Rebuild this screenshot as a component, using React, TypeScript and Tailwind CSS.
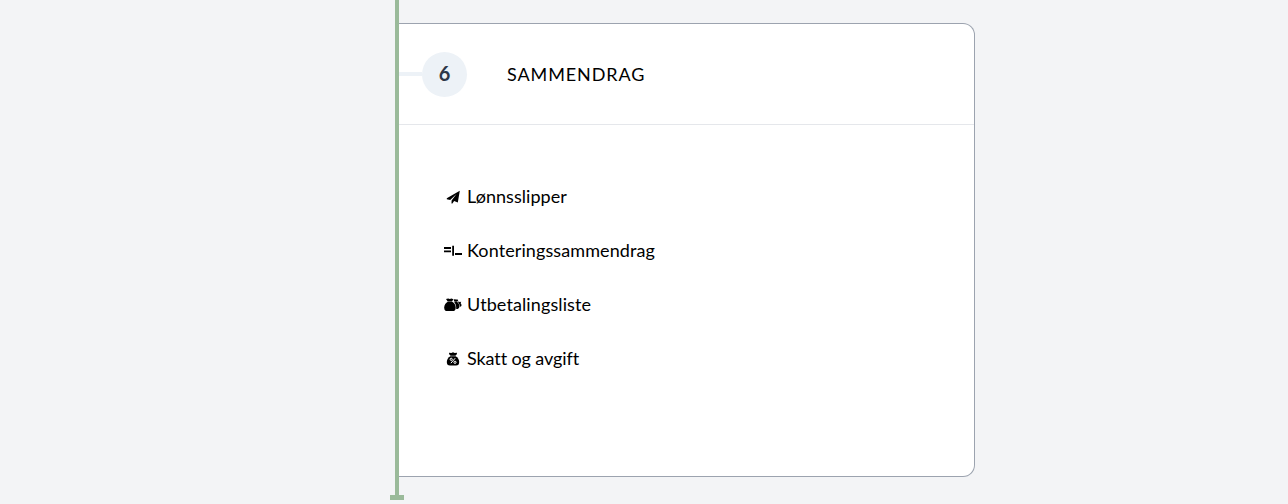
import type { ReactNode } from 'react';
import clsx from 'clsx';

type SummaryLinkProps = {
    icon: ReactNode
    children: string
    className?: string
}

const PlaneIcon = () => (
    <svg width="18" height="16" viewBox="0 0 18 16" fill="currentColor">
        <path d="M15.8 1.8 2.8 9.2v1l3.4.8 6.3-6.1-4.9 6.5-.1 3.2h.9l1.7-2.5 3.7 1.3z" />
    </svg>
)

const PostingIcon = () => (
    <svg width="18" height="16" viewBox="0 0 18 16" fill="currentColor">
        <path d="M0 4h7v2H0zM0 7.5h7v1.7H0zM8.2 2.8H10v10H8.2zM11 10h7v2h-7z" />
    </svg>
)

const BagsIcon = () => (
    <svg width="18" height="16" viewBox="0 0 18 16" fill="currentColor">
        <path d="M2 2.1 4.2 1.5l1.6.6 1.7-.6 1.9.7-1.4 2.2H3.7z" />
        <path d="M3.8 4.7h4.4c2 1.2 3.5 3.2 3.5 5.7 0 2.6-1 3.6-3 3.6H3.2c-2 0-3-1-3-3.600 0-2.500 1.600-4.500 3.600-5.700z" />
        <path d="m9.600 2.600 1.300-.4 1.100.4 1.600-.2.600.900-1 1.500h-2.700z" />
        <path d="M10.200 5h3c1.200.9 2.200 2.400 2.200 4.200 0 1.900-.8 2.800-3.200 2.800.2-3-.5-4.900-2-7z" />
        <path d="m14.200 4.400 1.600.5 1.400-.1-.6 1.500c.7.700 1 1.500.9 2.300-.2.900-.7 1.200-1.700 1.100 0-1.600-.5-3-1.600-4.200z" />
    </svg>
)

const TaxBagIcon = () => (
    <svg width="18" height="16" viewBox="0 0 18 16" fill="currentColor">
        <path d="m5 1.800 2.300.1L9 1.200l1.700.7 2.300-.1-.2 1.400-1.400 1.500H6.600L5.200 3.200z" />
        <path d="M6.300 5.300h5.400c2.100 1.300 3.500 3.400 3.500 5.800 0 2.500-1 3.500-3.200 3.500H6c-2.200 0-3.200-1-3.200-3.500 0-2.400 1.400-4.500 3.500-5.800z" />
        <path d="m6.900 12.200 4.300-5" stroke="white" strokeWidth="1" />
        <circle cx="7.200" cy="8.300" r="1.100" fill="none" stroke="white" strokeWidth="1" />
        <circle cx="11" cy="11.300" r="1.100" fill="none" stroke="white" strokeWidth="1" />
    </svg>
)

const SummaryLink = ({ icon, children, className = 'tracking-[0.1px]' }: SummaryLinkProps) => {
    return (
        <li className="flex h-[27px] items-center gap-[5px]">
            {icon}
            <a className={clsx('text-lg leading-[27px] [font-variant-ligatures:none]', className)}>{children}</a>
        </li>
    )
}

const App = () => {
    return (
        <div className="flex h-[504px] w-full overflow-hidden bg-[#f3f4f6] pl-[390px] font-['Lato',sans-serif] text-black">
            <div className="flex w-[14px] shrink-0 flex-col items-center">
                <div className="h-[495px] w-1 bg-[#9aba9a]" />
                <div className="h-[5px] w-full bg-[#9aba9a]" />
            </div>
            <section className="-ml-[5px] mt-[23px] h-[454px] w-[576px] shrink-0 rounded-r-xl border border-l-0 border-[#9ca3af] bg-white">
                <header className="flex h-[101px] items-center border-b border-[#e5e7eb]">
                    <div className="h-1 w-[23px] bg-[#edf2f7]" />
                    <div className="flex size-[45px] items-center justify-center rounded-full bg-[#edf2f7] pb-0.5 text-xl font-bold text-[#2d3748]">
                        6
                    </div>
                    <h2 className="ml-10 text-lg leading-[27px] tracking-[0.9px]">SAMMENDRAG</h2>
                </header>
                <ul className="flex flex-col gap-[27px] pl-[45px] pt-[58px]">
                    <SummaryLink icon={<PlaneIcon />} className="tracking-[0.05px]">Lønnsslipper</SummaryLink>
                    <SummaryLink icon={<PostingIcon />}>Konteringssammendrag</SummaryLink>
                    <SummaryLink icon={<BagsIcon />}>Utbetalingsliste</SummaryLink>
                    <SummaryLink icon={<TaxBagIcon />} className="tracking-[-0.1px]">Skatt og avgift</SummaryLink>
                </ul>
            </section>
        </div>
    )
}

export default App
